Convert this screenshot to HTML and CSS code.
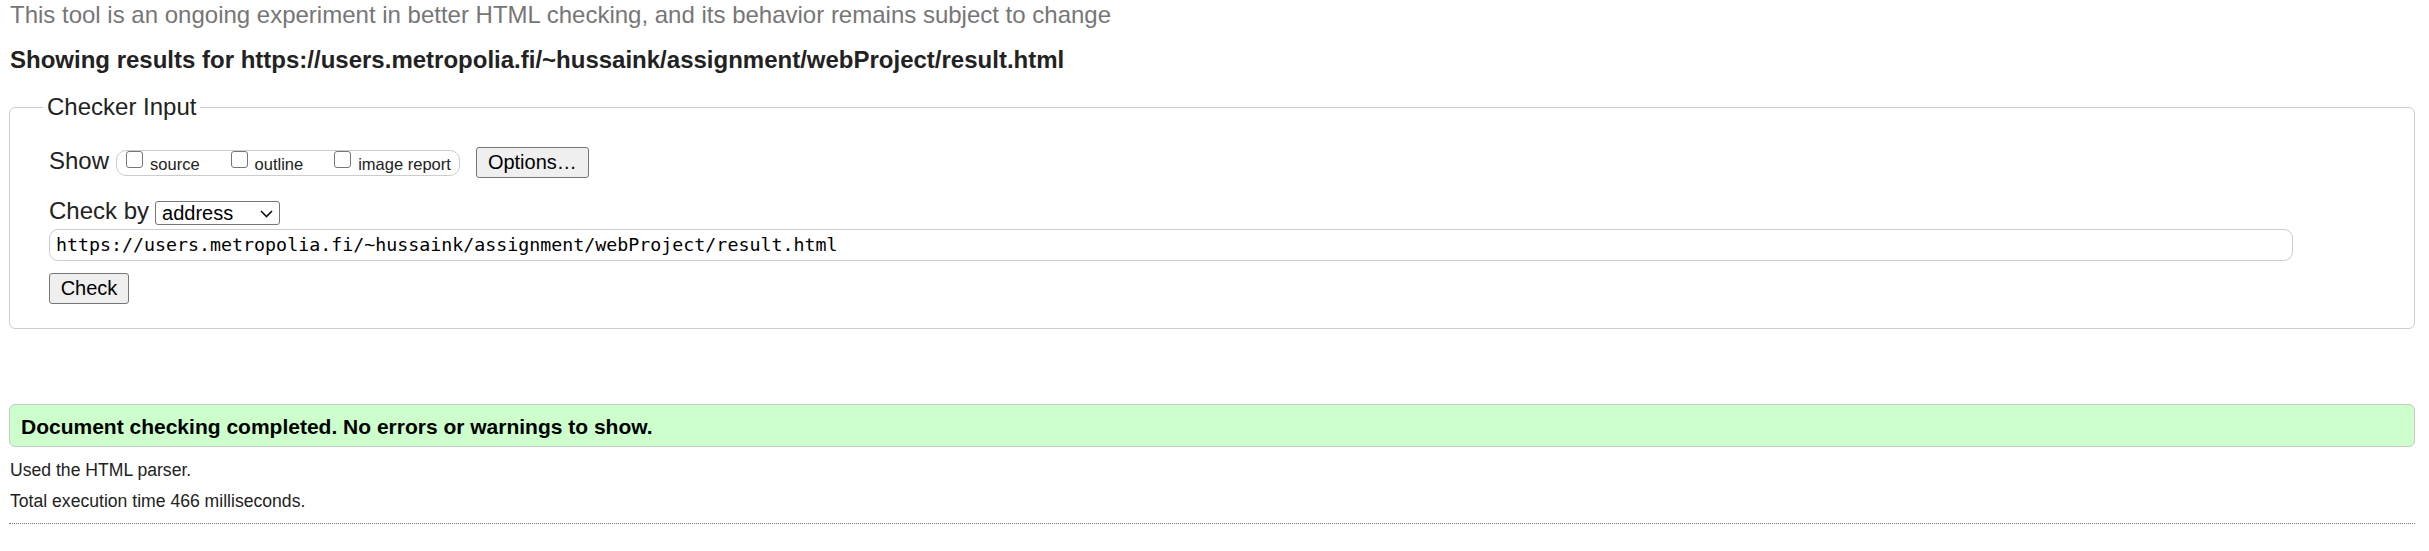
FILE: index.html
```html
<!DOCTYPE html>
<html lang="en">
<head>
<meta charset="utf-8">
<title>Nu Html Checker</title>
<link rel="stylesheet" href="styles.css">
</head>
<body>
<p class="intro">This tool is an ongoing experiment in better HTML checking, and its behavior remains subject to change</p>
<h2 class="results-heading">Showing results for https://users.metropolia.fi/~hussaink/assignment/webProject/result.html</h2>
<form class="checker-form">
  <fieldset class="checker">
    <legend class="checker-legend">Checker Input</legend>
    <div class="row show-row">
      <span class="row-label">Show</span>
      <span class="show-box">
        <label class="opt"><input class="cb" type="checkbox"><span class="opt-text">source</span></label>
        <label class="opt"><input class="cb" type="checkbox"><span class="opt-text">outline</span></label>
        <label class="opt opt-last"><input class="cb" type="checkbox"><span class="opt-text">image report</span></label>
      </span>
      <button class="btn btn-options" type="button">Options…</button>
    </div>
    <div class="row checkby-row">
      <span class="row-label">Check by</span>
      <span class="select">
        <span class="select-text">address</span>
        <svg class="chevron" width="13" height="8" viewBox="0 0 13 8"><polyline points="1,1 6.5,6.5 12,1" fill="none" stroke="#111" stroke-width="1.6"/></svg>
      </span>
    </div>
    <div class="url">https://users.metropolia.fi/~hussaink/assignment/webProject/result.html</div>
    <button class="btn btn-check" type="button">Check</button>
  </fieldset>
</form>
<div class="success">Document checking completed. No errors or warnings to show.</div>
<p class="meta meta-first">Used the HTML parser.</p>
<p class="meta meta-second">Total execution time 466 milliseconds.</p>
<hr class="dotted">
</body>
</html>
```
FILE: styles.css
```css
html, body {
  background: #ffffff;
}
body {
  margin: 0;
  padding: 0 14px 0 9px;
  font-family: "Liberation Sans", Arial, sans-serif;
  color: #222222;
}
.intro {
  margin: 1px 0 0 1px;
  font-size: 24px;
  line-height: 28px;
  color: #767676;
}
.results-heading {
  margin: 17px 0 0 1px;
  font-size: 24px;
  line-height: 28px;
  font-weight: bold;
  color: #222222;
}
.checker-form {
  margin: 19px 0 0 0;
}
.checker {
  margin: 0;
  padding: 26px 39px 24px 39px;
  border: 1px solid #cccccc;
  border-radius: 6px;
  min-width: 0;
}
.checker-legend {
  margin-left: -6px;
  padding: 0 4px;
  font-size: 24px;
  line-height: 28px;
  color: #222222;
}
.row {
  display: flex;
  align-items: center;
}
.show-row {
  height: 31px;
}
.row-label {
  font-size: 24px;
  line-height: 26px;
  margin-right: 6px;
  margin-bottom: 4px;
  color: #222222;
}
.show-box {
  display: flex;
  align-items: flex-start;
  box-sizing: border-box;
  height: 26px;
  padding: 0 8px 0 9px;
  border: 1px solid #cccccc;
  border-radius: 10px;
  margin-left: 1px;
}
.opt {
  display: flex;
  align-items: flex-start;
  margin-right: 31px;
}
.opt-last {
  margin-right: 0;
}
.cb {
  appearance: none;
  -webkit-appearance: none;
  box-sizing: border-box;
  width: 17px;
  height: 17px;
  margin: 0 7px 0 0;
  border: 1.5px solid #767676;
  border-radius: 3px;
  background: #ffffff;
}
.opt-text {
  font-size: 16.5px;
  line-height: 24px;
  padding-top: 1px;
  color: #222222;
}
.btn {
  box-sizing: border-box;
  height: 31px;
  margin: 0;
  border: 1px solid #767676;
  border-radius: 3px;
  background: #efefef;
  color: #000000;
  font-family: "Liberation Sans", Arial, sans-serif;
  font-size: 20px;
  line-height: 29px;
}
.btn-options {
  margin-left: 16px;
  padding: 0 11px;
  width: 113px;
}
.checkby-row {
  margin-top: 23px;
  height: 24px;
}
.checkby-row .row-label {
  line-height: 24px;
  margin-bottom: 5px;
}
.select {
  box-sizing: border-box;
  display: flex;
  align-items: center;
  justify-content: space-between;
  width: 125px;
  height: 24px;
  padding: 0 6px 0 6px;
  border: 1px solid #767676;
  border-radius: 3px;
  background: #ffffff;
}
.select-text {
  font-size: 20px;
  line-height: 22px;
  color: #000000;
}
.chevron {
  display: block;
  margin-top: 1px;
}
.url {
  box-sizing: border-box;
  margin: 4px 82px 0 0;
  height: 32px;
  padding: 0 5px 0 6px;
  border: 1px solid #cccccc;
  border-radius: 9px;
  font-family: "DejaVu Sans Mono", "Liberation Mono", monospace;
  font-size: 18.3px;
  line-height: 30px;
  color: #000000;
  white-space: nowrap;
  overflow: hidden;
}
.btn-check {
  display: block;
  margin-top: 12px;
  width: 80px;
  padding: 0 10px;
}
.success {
  margin-top: 75px;
  box-sizing: border-box;
  height: 43px;
  padding: 3px 11px 1px 11px;
  border: 1px solid #c8c8c8;
  border-radius: 6px;
  background: #ccffcc;
  font-size: 21px;
  line-height: 37px;
  font-weight: bold;
  color: #000000;
}
.meta {
  margin: 0 0 0 1px;
  font-size: 17.6px;
  line-height: 22px;
  color: #222222;
}
.meta-first {
  margin-top: 12px;
}
.meta-second {
  margin-top: 9px;
}
.dotted {
  margin: 11px 0 0 0;
  height: 0;
  border: 0;
  border-top: 1px dotted #777777;
}
```
